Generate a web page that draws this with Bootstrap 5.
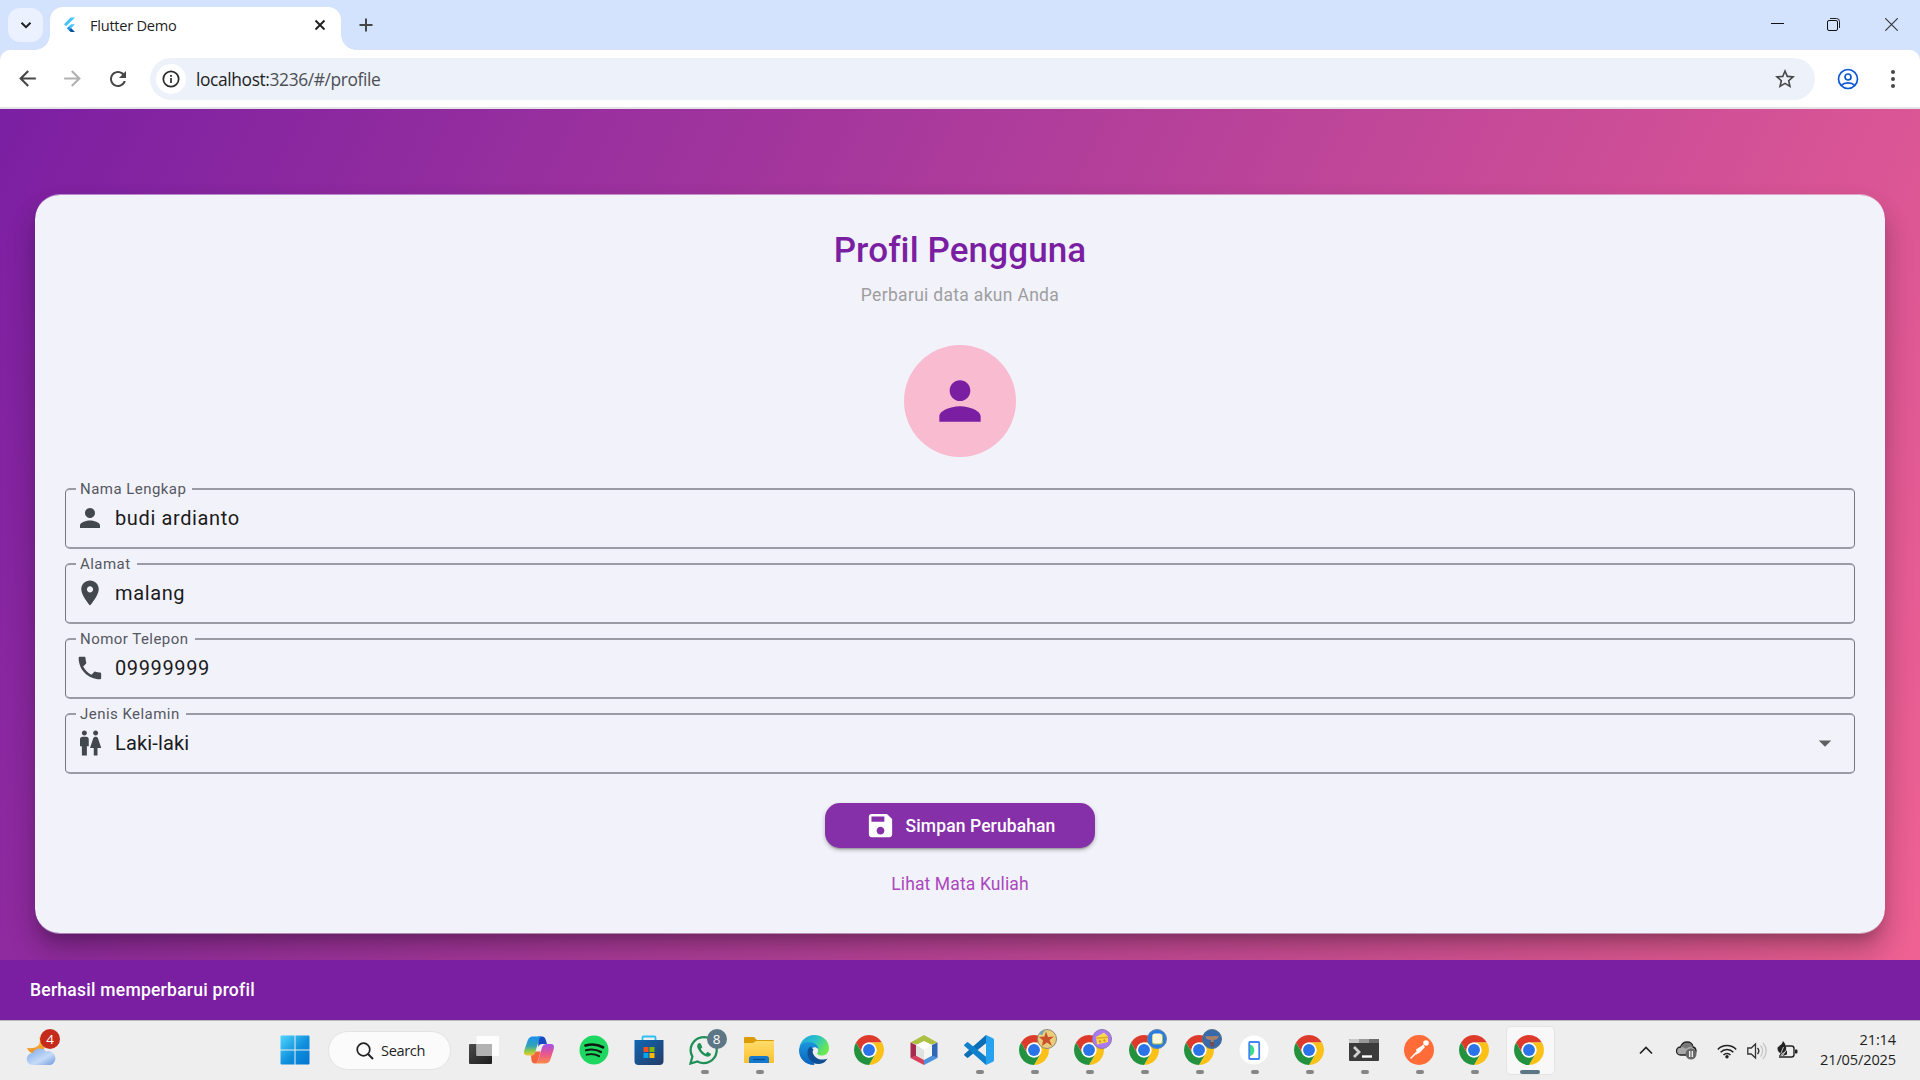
<!DOCTYPE html>
<html lang="id">
<head>
<meta charset="utf-8">
<title>Flutter Demo</title>
<link href="https://cdn.jsdelivr.net/npm/bootstrap@5.3.0/dist/css/bootstrap.min.css" rel="stylesheet">
<script src="https://cdn.jsdelivr.net/npm/bootstrap@5.3.0/dist/js/bootstrap.bundle.min.js"></script>
<style>
body{width:1920px;height:1080px;overflow:hidden;font-family:"Open Sans","Noto Sans",sans-serif;background:#fff;color:#1f1f1f}
svg{display:block;flex:none}
.tabstrip{height:50px;background:#d3e2fd;padding-left:8px}
.tab-search{width:35px;height:34px;border-radius:12px;background:#ebf1fe;margin:8px 7px 8px 0}
.tab-active{width:291px;height:43px;margin-top:7px;background:#fff;border-radius:13px 13px 0 0;padding:0 15px 7px 13px}
.tab-active::before,.tab-active::after{content:"";position:absolute;bottom:0;width:15px;height:15px}
.tab-active::before{left:-15px;background:radial-gradient(circle at 0 0,transparent 14.5px,#fff 15px)}
.tab-active::after{right:-15px;background:radial-gradient(circle at 100% 0,transparent 14.5px,#fff 15px)}
.tab-title{font-size:14.6px;letter-spacing:-.25px;margin-left:14px;line-height:20px}
.new-tab{margin:18px 0 0 18px}
.win-buttons{height:49px;margin-right:22px}
.win-max{margin:0 45px 0 -5px}
.toolbar-wrap{height:59px;background:#d3e2fd}
.toolbar-in{height:57px;background:#fff;border-radius:10px 10px 0 0;padding-left:15px}
.toolbar-line{height:2px;background:#e2e4e6}
.nav-fwd{margin-left:20px}
.nav-reload{margin-left:20.5px}
.omnibox{width:1665px;height:42px;border-radius:21px;background:#ecf1fa;margin-left:20.5px;padding:0 18px 0 6px}
.profile-ic{margin-left:22px}
.menu-ic{margin-left:31px}
.info-dot{width:30px;height:30px;background:#fff}
.url-text{font-size:17.4px;letter-spacing:-.39px;margin-left:10px;color:#4c4f54;line-height:24px}
.url-text span{color:#1f1f1f}
.app-view{height:911px;background:linear-gradient(115.38deg,#7b1fa2,#f06292);font-family:Roboto,sans-serif}
.profile-panel{margin:85px 35px 0;height:740px;border-radius:25px;background:#f2f2fb;background-clip:padding-box;border:0 solid rgba(242,242,251,.5);border-width:1px 0;padding:31px 30px 0;box-shadow:0 10px 13px -6px rgba(0,0,0,.2),0 20px 30px 2px rgba(0,0,0,.14),0 12px 26px 0 rgba(0,0,0,.1)}
.panel-title{font-size:35px;line-height:50px;font-weight:500;color:#7b1fa2;letter-spacing:.12px;margin:0}
.panel-sub{font-size:17.5px;line-height:28px;color:#9e9e9e;letter-spacing:.31px;margin:5px 0 35.5px}
.avatar-disc{width:112.5px;height:112.5px;background:#f8bbd0;color:#7b1fa2;margin-bottom:31px;padding-bottom:.5px}
.field-box{height:61px;margin-bottom:14px;border:1px solid #767880;border-top:2px solid #9a9ba4;border-bottom:2px solid #9a9ba4;border-radius:5px;padding:0 14px 2px 9px;color:#43474e}
.field-label{position:absolute;left:10px;top:-11px;background:#f2f2fb;padding:0 6px 0 4px;font-size:15px;line-height:20px;letter-spacing:.46px;color:#55585f}
.field-value{font-size:20px;letter-spacing:.62px;margin-left:10px;color:#1b1b20;line-height:30px}
.value-tight{letter-spacing:.15px}
.save-btn{width:270px;height:45px;border-radius:15px;background:#8530a8;color:#fff;border:0;margin-top:15px;font-size:17.5px;font-weight:500;letter-spacing:.1px;padding:1px 0 0;box-shadow:0 3px 2px -2px rgba(0,0,0,.25),0 2px 4px rgba(0,0,0,.25)}
.save-btn svg{margin:-1px 10px 0 0}
.courses-link{font-size:17.5px;letter-spacing:.13px;color:#ab47bc;line-height:24px;margin-top:24px}
.snack{height:60px;background:#7b1fa2;color:#fff;padding-left:30px;font-size:17.5px;font-weight:500;letter-spacing:.25px}
.taskbar{height:60px;background:#eee;border-top:1px solid #bdbdbd}
.weather{width:267px;padding-left:26px}
.weather .count{left:40px;top:-7px;background:#c42b1c}
.cell{width:55px;height:59px;padding-bottom:1px}
.cell.running::after{content:"";position:absolute;left:24px;top:49px;width:8px;height:4px;border-radius:2px;background:#868686}
.cell.focused::before{content:"";position:absolute;left:4px;top:5px;width:49px;height:49px;border-radius:5px;background:#f8f8f8;border:1px solid #e4e4e4}
.cell.focused::after{left:18px;width:20px;background:#5d7685}
.cell>svg{position:relative;z-index:1}
.cell .corner{position:absolute;left:30px;top:8px;z-index:2}
.count{border-radius:50%;width:20px;height:20px;color:#fff;font-size:13.5px;line-height:20px;text-align:center}
.unread{background:#5d7685}
.search-pill{width:123px;height:39px;border-radius:20px;background:#fbfbfb;border:1px solid #e3e3e3;margin:0 5.5px 0 6px;padding-left:27px;font-size:14.6px;letter-spacing:-.35px}
.search-pill span{margin-left:7px}
.tray{margin-right:24px}
.tray svg{margin-right:10px}
.tray .chev{margin-right:23px}
.tray .cloud{margin-right:20px}
.tray .batt{margin:0 0 2px}
.clock{font-size:14.6px;line-height:20px;letter-spacing:-.15px;text-align:right;width:98px;margin-top:-4px}
</style>
</head>
<body class="d-flex flex-column">
<svg width="0" height="0" class="position-absolute">
<defs>
<symbol id="chrome" viewBox="2 2 44 44">
<path fill="#dd3a2c" d="M43.05 13A22 22 0 0 0 4.95 13L14.47 29.5A11 11 0 0 1 24 13Z"/>
<path fill="#fbc116" d="M43.05 13A22 22 0 0 1 24 46L33.53 29.5A11 11 0 0 0 24 13Z"/>
<path fill="#23923f" d="M24 46A22 22 0 0 1 4.95 13L14.47 29.5A11 11 0 0 0 33.53 29.5Z"/>
<circle cx="24" cy="24" r="11" fill="#fff"/><circle cx="24" cy="24" r="8.7" fill="#2a74e8"/>
</symbol>
<symbol id="person" viewBox="0 0 24 24"><path fill="currentColor" d="M12 12c2.21 0 4-1.79 4-4s-1.79-4-4-4-4 1.79-4 4 1.79 4 4 4zm0 2c-2.67 0-8 1.34-8 4v2h16v-2c0-2.66-5.33-4-8-4z"/></symbol>
<linearGradient id="gw" x1="0" y1="0" x2="1" y2="1"><stop offset="0" stop-color="#50d5fd"/><stop offset=".55" stop-color="#0f8fdc"/><stop offset="1" stop-color="#0474d2"/></linearGradient>
<linearGradient id="gcl" x1="0" y1="0" x2="1" y2="1"><stop offset="0" stop-color="#7da7ea"/><stop offset=".6" stop-color="#c5dbf8"/><stop offset="1" stop-color="#6f97de"/></linearGradient>
<linearGradient id="gm" x1="0" y1="0" x2="0" y2="1"><stop offset="0" stop-color="#fbc645"/><stop offset="1" stop-color="#ee8a1d"/></linearGradient>
<linearGradient id="gc1" x1="0" y1="0" x2="0" y2="1"><stop offset="0" stop-color="#1b8df0"/><stop offset=".5" stop-color="#2fa5b5"/><stop offset=".8" stop-color="#9ccc3c"/><stop offset="1" stop-color="#f5c33a"/></linearGradient>
<linearGradient id="gc2" x1="0" y1="0" x2="0" y2="1"><stop offset="0" stop-color="#a252e8"/><stop offset=".5" stop-color="#e8568e"/><stop offset="1" stop-color="#fb8a4a"/></linearGradient>
<linearGradient id="gs" x1="0" y1="0" x2="1" y2="1"><stop offset="0" stop-color="#0f67b5"/><stop offset="1" stop-color="#243c66"/></linearGradient>
<linearGradient id="gf" x1="0" y1="0" x2="0" y2="1"><stop offset="0" stop-color="#ffdc6b"/><stop offset="1" stop-color="#fcc02e"/></linearGradient>
<linearGradient id="ge" x1="0" y1="0" x2="1" y2=".5"><stop offset="0" stop-color="#1a9fe0"/><stop offset=".55" stop-color="#2cc3c6"/><stop offset="1" stop-color="#6be84f"/></linearGradient>
<linearGradient id="ge2" x1="0" y1="0" x2="0" y2="1"><stop offset="0" stop-color="#1b96dc"/><stop offset="1" stop-color="#0b62bd"/></linearGradient>
<linearGradient id="gd" x1="0" y1="0" x2="1" y2="1"><stop offset="0" stop-color="#4a4a4a"/><stop offset="1" stop-color="#1d1d1d"/></linearGradient>
</defs></svg>

<header>
<div class="tabstrip d-flex">
  <div class="tab-search d-flex align-items-center justify-content-center"><svg width="12" height="12" viewBox="0 0 12 12"><path d="M1.5 3.7 6 8.2l4.5-4.5" fill="none" stroke="#1f1f1f" stroke-width="2"/></svg></div>
  <div class="tab-active position-relative d-flex align-items-center">
    <svg width="13" height="16" viewBox="0 0 13 16"><path fill="#47c5fb" d="M7.6.5H12L3.2 9.3 1 7.2Z"/><path fill="#47c5fb" d="M8 7.3h4L8 11.3 5.8 9.3Z"/><path fill="#2196f3" d="M3.8 11.3 5.9 9.2 8.3 11.5 6 13.5Z"/><path fill="#00569e" d="m6 13.5 2.2-2.2L12 15H7.7Z"/></svg>
    <span class="tab-title">Flutter Demo</span>
    <svg class="ms-auto" width="12" height="12" viewBox="0 0 12 12"><path d="m1.5 1.500 9 9m0-9-9 9" stroke="#1f1f1f" stroke-width="1.9"/></svg>
  </div>
  <svg class="new-tab" width="14" height="14" viewBox="0 0 14 14"><path d="M7 .5v13M.5 7h13" stroke="#474747" stroke-width="2"/></svg>
  <div class="win-buttons d-flex ms-auto align-items-center">
    <svg width="13" height="13" viewBox="0 0 13 13" class="me-5"><path d="M0 5.500h13" stroke="#111"/></svg>
    <svg class="win-max" width="13" height="13" viewBox="0 0 13 13"><path d="M3 .5h6.500a3 3 0 0 1 3 3V10" fill="none" stroke="#222"/><rect x=".5" y="2.5" width="10" height="10" rx="1.5" fill="none" stroke="#111"/></svg>
    <svg width="13" height="13" viewBox="0 0 13 13"><path d="m.3.3 12.400 12.400m0-12.400L.3 12.700" stroke="#333" stroke-width="1.1"/></svg>
  </div>
</div>
<div class="toolbar-wrap">
<div class="toolbar-in d-flex align-items-center">
  <svg width="25" height="25" viewBox="0 0 24 24"><path fill="#474747" d="M20 11H7.830l5.590-5.590L12 4l-8 8 8 8 1.410-1.410L7.830 13H20v-2z"/></svg>
  <svg class="nav-fwd" width="25" height="25" viewBox="0 0 24 24"><path fill="#b1b1b1" d="m12 4-1.410 1.410L16.170 11H4v2h12.170l-5.580 5.590L12 20l8-8z"/></svg>
  <svg class="nav-reload" width="24" height="24" viewBox="0 0 24 24"><path fill="#474747" d="M17.650 6.350C16.200 4.900 14.210 4 12 4c-4.420 0-7.990 3.580-7.990 8s3.570 8 7.990 8c3.730 0 6.840-2.550 7.730-6h-2.080c-.82 2.330-3.040 4-5.650 4-3.310 0-6-2.690-6-6s2.690-6 6-6c1.660 0 3.140.69 4.220 1.780L13 11h7V4l-2.350 2.350z"/></svg>
  <div class="omnibox d-flex align-items-center">
    <div class="info-dot rounded-circle d-flex align-items-center justify-content-center"><svg width="18" height="18" viewBox="0 0 18 18"><circle cx="9" cy="9" r="7.7" fill="none" stroke="#2b2b2b" stroke-width="1.7"/><path d="M9 8v5" stroke="#2b2b2b" stroke-width="1.7"/><path d="M9 5v1.800" stroke="#2b2b2b" stroke-width="1.8"/></svg></div>
    <div class="url-text"><span>localhost:</span>3236/#/profile</div>
    <svg class="ms-auto" width="24" height="24" viewBox="0 0 24 24"><path fill="#474747" d="m22 9.240-7.190-.62L12 2 9.190 8.630 2 9.240l5.460 4.730L5.820 21 12 17.270 18.180 21l-1.630-7.030L22 9.240zM12 15.400l-3.760 2.270 1-4.280-3.320-2.880 4.380-.38L12 6.100l1.710 4.040 4.380.38-3.320 2.880 1 4.280L12 15.400z"/></svg>
  </div>
  <svg class="profile-ic" width="22" height="22" viewBox="0 0 22 22"><g fill="none" stroke="#0b57d0" stroke-width="1.7"><circle cx="11" cy="11" r="9.5"/><circle cx="11" cy="9" r="3"/><path d="M4.300 17.300C6 15.600 8.300 14.900 11 14.900s5 .7 6.700 2.400"/></g></svg>
  <svg class="menu-ic" width="6" height="20" viewBox="0 0 6 20"><g fill="#474747"><circle cx="3" cy="3" r="2"/><circle cx="3" cy="10" r="2"/><circle cx="3" cy="17" r="2"/></g></svg>
</div>
<div class="toolbar-line"></div>
</div>
</header>

<main class="app-view d-flex flex-column overflow-hidden">
<section class="profile-panel d-flex flex-column align-items-center">
  <h1 class="panel-title">Profil Pengguna</h1>
  <p class="panel-sub">Perbarui data akun Anda</p>
  <div class="avatar-disc rounded-circle d-flex align-items-center justify-content-center"><svg width="62" height="62"><use href="#person"/></svg></div>
  <div class="w-100">
    <div class="field-box position-relative d-flex align-items-center"><label class="field-label">Nama Lengkap</label><svg width="30" height="30"><use href="#person"/></svg><span class="field-value">budi ardianto</span></div>
    <div class="field-box position-relative d-flex align-items-center"><label class="field-label">Alamat</label><svg width="30" height="30" viewBox="0 0 24 24"><path fill="currentColor" d="M12 2C8.130 2 5 5.130 5 9c0 5.250 7 13 7 13s7-7.750 7-13c0-3.870-3.130-7-7-7zm0 9.500c-1.380 0-2.500-1.120-2.500-2.500s1.120-2.500 2.500-2.500 2.500 1.120 2.500 2.500-1.120 2.500-2.500 2.500z"/></svg><span class="field-value">malang</span></div>
    <div class="field-box position-relative d-flex align-items-center"><label class="field-label">Nomor Telepon</label><svg width="30" height="30" viewBox="0 0 24 24"><path fill="currentColor" d="M6.540 10.790c1.440 2.830 3.760 5.140 6.590 6.590l2.200-2.200c.27-.27.67-.36 1.020-.24 1.120.37 2.330.57 3.570.57.55 0 1 .45 1 1V20c0 .55-.45 1-1 1-9.390 0-17-7.610-17-17 0-.55.45-1 1-1h3.500c.55 0 1 .45 1 1 0 1.250.2 2.450.57 3.570.11.35.03.74-.25 1.020l-2.200 2.200z"/></svg><span class="field-value">09999999</span></div>
    <div class="field-box position-relative d-flex align-items-center"><label class="field-label">Jenis Kelamin</label><svg width="30" height="30" viewBox="0 0 24 24"><path fill="currentColor" d="M5.500 22v-7.500H4V9c0-1.100.9-2 2-2h3c1.100 0 2 .9 2 2v5.500H9.500V22h-4zM18 22v-6h3l-2.540-7.630C18.180 7.550 17.420 7 16.560 7h-.12c-.86 0-1.630.55-1.900 1.370L12 16h3v6h3zM7.500 6c1.110 0 2-.89 2-2s-.89-2-2-2-2 .89-2 2 .89 2 2 2zm9 0c1.110 0 2-.89 2-2s-.89-2-2-2-2 .89-2 2 .89 2 2 2z"/></svg><span class="field-value value-tight">Laki-laki</span><svg class="ms-auto" width="30" height="30" viewBox="0 0 24 24"><path fill="#5f6062" d="m7 10 5 5 5-5z"/></svg></div>
  </div>
  <button class="save-btn d-flex align-items-center justify-content-center"><svg width="31" height="31" viewBox="0 0 24 24"><path fill="#fff" d="M17 3H5c-1.110 0-2 .9-2 2v14c0 1.100.89 2 2 2h14c1.100 0 2-.9 2-2V7l-4-4zm-5 16c-1.660 0-3-1.340-3-3s1.340-3 3-3 3 1.340 3 3-1.340 3-3 3zm3-10H5V5h10v4z"/></svg><span>Simpan Perubahan</span></button>
  <a class="courses-link text-decoration-none">Lihat Mata Kuliah</a>
</section>
<div class="snack d-flex align-items-center mt-auto position-relative">Berhasil memperbarui profil</div>
</main>

<footer class="taskbar d-flex align-items-center">
  <div class="weather position-relative"><svg width="32" height="30" viewBox="0 0 32 30"><path fill="url(#gm)" d="M13 1c3 8-2 12-12 11 2 4 5 6 10 6s8-5 8-9-3-7-6-8Z"/><path fill="url(#gcl)" d="M7 29a6 6 0 0 1-.5-12A8 8 0 0 1 20 15.500a7 7 0 0 1 4.500 13.500Z"/></svg>
    <span class="count position-absolute">4</span></div>
  <div class="cell d-flex align-items-center justify-content-center"><svg width="30" height="30" viewBox="0 0 30 30"><path fill="url(#gw)" d="M.5 1.500a1 1 0 0 1 1-1h13v14H.5Zm15-1h13a1 1 0 0 1 1 1v13h-14Zm-15 15h14v14h-13a1 1 0 0 1-1-1Zm15 0h14v13a1 1 0 0 1-1 1h-13Z"/></svg></div>
  <div class="search-pill d-flex align-items-center"><svg width="18" height="18" viewBox="0 0 18 18"><circle cx="7.5" cy="7.5" r="6.3" fill="none" stroke="#222" stroke-width="1.7"/><path d="m12 12 5 5" stroke="#222" stroke-width="2"/></svg><span>Search</span></div>
  <div class="cell d-flex align-items-center justify-content-center"><svg width="30" height="30" viewBox="0 0 30 30"><rect y="9" width="23" height="20" rx="1" fill="url(#gd)"/><rect x="7.5" y="1" width="22.5" height="20" rx="1" fill="#fff" opacity=".85"/><path d="M7.500 9H23v12H8.500a1 1 0 0 1-1-1Z" fill="#b2b2b2"/></svg></div>
  <div class="cell d-flex align-items-center justify-content-center"><svg width="30" height="30" viewBox="0 0 30 30"><path fill="#1648c4" d="M14 1.500h4c2 0 3 1 3.600 3L23 9h-5c-2 0-3 1-3.600 3Z"/><path fill="url(#gc1)" d="M9 1.500h9c-2 .5-2.600 2-3.200 4l-3.300 11C10.800 19 9.500 20.500 7 20.500H3c-3 0-3.500-2.500-2.600-5.500L3.500 6C4.500 3 6 1.500 9 1.500Z"/><path fill="#f4643c" d="M7 20.500c2.500 0 3.800-1.500 4.500-4h5l-2 7.500c-.7 3-2 4.500-3.500 4.500-2 0-3-1-3.500-3Z"/><path fill="url(#gc2)" d="M23 9h4c3 0 3.500 2.500 2.600 5.500l-3 9.500c-1 3-2.600 4.500-5.600 4.500H11c2-.5 2.800-2 3.400-4l3.600-12C18.800 10 20.500 9 23 9Z"/></svg></div>
  <div class="cell d-flex align-items-center justify-content-center"><svg width="30" height="30" viewBox="0 0 30 30"><circle cx="15" cy="15" r="14.5" fill="#1ed760"/><g fill="none" stroke="#10190f" stroke-linecap="round"><path d="M6.500 10.500c6-1.700 12.500-1 17.500 1.800" stroke-width="2.7"/><path d="M7 15.300c5-1.400 10.500-.8 15 1.700" stroke-width="2.2"/><path d="M7.600 19.700c4.200-1 8.800-.6 12.500 1.500" stroke-width="1.9"/></g></svg></div>
  <div class="cell d-flex align-items-center justify-content-center"><svg width="30" height="30" viewBox="0 0 30 30"><path d="M8.500 6V2.500a1 1 0 0 1 1-1h11a1 1 0 0 1 1 1V6" fill="none" stroke="#2bc0f0" stroke-width="1.8"/><path fill="url(#gs)" d="M.5 5h29v21a4 4 0 0 1-4 4h-21a4 4 0 0 1-4-4Z"/><path fill="#f25022" d="M9.500 12h5v5h-5z"/><path fill="#7fba00" d="M15.500 12h5v5h-5z"/><path fill="#00a4ef" d="M9.500 18h5v5h-5z"/><path fill="#ffb900" d="M15.500 18h5v5h-5z"/></svg></div>
  <div class="cell running position-relative d-flex align-items-center justify-content-center"><svg width="30" height="30" viewBox="0 0 30 30"><path fill="none" stroke="#1f8f58" stroke-width="2.3" d="M1.500 28.500 3.400 21.500A13 13 0 1 1 8.500 26.500Z"/><path fill="#1f8f58" d="M10 8c-2 1-2.500 3.500-1 6 2.300 4 5 6.500 8.500 7.500 2 .5 4-.5 4.600-2.600l-3.600-2.100-1.700 1.900c-2-.8-4-2.700-5-4.700l1.500-1.800-1.600-3.700C11.200 8 10.600 7.800 10 8Z"/></svg><span class="corner count unread">8</span></div>
  <div class="cell running position-relative d-flex align-items-center justify-content-center"><svg width="30" height="30" viewBox="0 0 30 30"><path fill="#dd9a09" d="M0 3a1 1 0 0 1 1-1h9l3 3h16a1 1 0 0 1 1 1v5H0Z"/><path fill="url(#gf)" d="M0 8h9l3-2h18v21a1 1 0 0 1-1 1H1a1 1 0 0 1-1-1Z"/><path fill="#1479cf" d="M5 28v-4.500a2.500 2.500 0 0 1 2.500-2.500h15a2.500 2.500 0 0 1 2.500 2.500V28Z"/><path d="M9 24.500h12" stroke="#0b4d8f" stroke-width="1.3"/></svg></div>
  <div class="cell d-flex align-items-center justify-content-center"><svg width="30" height="30" viewBox="0 0 30 30"><path fill="url(#ge)" d="M.5 12C2 5 8 0 15 0c9 0 15 6 15 13 0 5-3.500 7.500-7 7.500-3.500 0-5.500-1.500-4.500-3 1.500-2 .8-5.500-3.500-6.500-5-1-11-.5-14.500 1Z"/><path fill="url(#ge2)" d="M15 30C6 30 0 23 0 15.500 0 10 4.500 7 9.500 7c5 0 9.800 3 9.800 7-3-3.500-7.300-1.500-7.300 2C12 23 17 29 15 30Z"/><path fill="#114f94" d="M11.500 11.500C8 14 7.500 19 10 23.500c2.800 5 9 7 14 4.500 2-1 3.500-2.600 4.500-4.500-3 1.500-8 1.800-11.500-1-3.500-2.800-4-6.500-2.500-8Z"/></svg></div>
  <div class="cell d-flex align-items-center justify-content-center"><svg width="30" height="30"><use href="#chrome"/></svg></div>
  <div class="cell d-flex align-items-center justify-content-center"><svg width="30" height="30" viewBox="0 0 30 30"><path fill="#acc043" d="M15 0 28.500 7.500 15 12 1.500 7.500Z"/><path fill="#a72b50" d="M1.500 7.500 7 10v11l-5.500 2Z"/><path fill="#d6405d" d="M1.500 23 7 20.500l8 4.500v5Z"/><path fill="#3167b4" d="M28.500 7.500 23 10v11l5.500 2Z"/><path fill="#4c92dd" d="m28.500 23-5.500-2.500-8 4.500v5Z"/><path fill="#fff" d="m15 6 8 4-8 5-8-5Z"/><path fill="#dfe3e0" d="m7 10 8 5v9.500L7 20.500Z"/><path fill="#f4f6f3" d="m23 10-8 5v9.500l8-4Z"/></svg></div>
  <div class="cell running position-relative d-flex align-items-center justify-content-center"><svg width="30" height="30" viewBox="0 0 30 30"><path fill="#0b6fb8" d="M22 0v8.300L4.300 22.600a1.200 1.200 0 0 1-1.600 0L.5 20.500a1 1 0 0 1 0-1.500Z"/><path fill="#0e80cc" d="M22 30v-8.300L4.300 7.400a1.200 1.200 0 0 0-1.600 0L.5 9.500a1 1 0 0 0 0 1.500Z"/><path fill="#27a2f0" d="m22 0 7 3.300c.7.3 1 .9 1 1.700v20c0 .8-.3 1.400-1 1.700L22 30Z"/></svg></div>
  <div class="cell running position-relative d-flex align-items-center justify-content-center"><svg width="30" height="30"><use href="#chrome"/></svg><svg class="corner" width="20" height="20" viewBox="0 0 20 20"><circle cx="10" cy="10" r="9.5" fill="#e9cc7c" stroke="#8f8972"/><path fill="#6ba8c4" d="M2 5a9 9 0 0 1 6-4L5 6Z"/><path fill="#c9512c" d="m9 2.500 2 5.500 6-.5-4.500 3.500 2.500 6-5-3.500-5 3.500 1-5.500L2 8l5.500-.5Z"/></svg></div>
  <div class="cell running position-relative d-flex align-items-center justify-content-center"><svg width="30" height="30"><use href="#chrome"/></svg><svg class="corner" width="20" height="20" viewBox="0 0 20 20"><circle cx="10" cy="10" r="9.5" fill="#aa78f2" stroke="#8b79ad"/><path fill="#f6d94d" d="m4 8 8-4.500 4 4V13L5 15.500Z"/><path fill="#e0a828" d="m4 8.500 12-1V9L4.500 10Z"/><circle cx="8" cy="12.5" r="1.3" fill="#d99a1c"/><circle cx="12.5" cy="11.5" r="1.2" fill="#d99a1c"/></svg></div>
  <div class="cell running position-relative d-flex align-items-center justify-content-center"><svg width="30" height="30"><use href="#chrome"/></svg><svg class="corner" width="20" height="20" viewBox="0 0 20 20"><circle cx="10" cy="10" r="9.5" fill="#2b7be4" stroke="#6486a6"/><rect x="5" y="5" width="11" height="10.5" rx="2" fill="#9fbf52"/><rect x="5.5" y="4.5" width="9.5" height="10" rx="2.5" fill="#fdf6dc"/></svg></div>
  <div class="cell running position-relative d-flex align-items-center justify-content-center"><svg width="30" height="30"><use href="#chrome"/></svg><svg class="corner" width="20" height="20" viewBox="0 0 20 20"><circle cx="10" cy="10" r="9.5" fill="#3869a8" stroke="#54708f"/><path fill="#a98069" d="M3 7c3 1 5-.5 7 .5C12 6.500 14 7.500 17 7c-1 3-3.500 4-5.500 4l.5 4-3 1.500V11C6 11 4 10 3 7Z"/><path fill="#7b4a48" d="M8 13h4v4l-3 1Z"/></svg></div>
  <div class="cell running position-relative d-flex align-items-center justify-content-center"><svg width="30" height="30" viewBox="0 0 30 30"><circle cx="15" cy="15" r="14.5" fill="#fff"/><path fill="#3ddc84" d="M11 9.500a6 6 0 0 1 0 11.500Z"/><rect x="10.2" y="7" width="10" height="17" rx=".8" fill="none" stroke="#4285f4" stroke-width="1.8"/></svg></div>
  <div class="cell running position-relative d-flex align-items-center justify-content-center"><svg width="30" height="30"><use href="#chrome"/></svg></div>
  <div class="cell running position-relative d-flex align-items-center justify-content-center"><svg width="30" height="30" viewBox="0 0 30 30"><rect y="4" width="30" height="22" rx="1" fill="#3b3b3b"/><path fill="#c9c9c9" d="M0 5a1 1 0 0 1 1-1h9v4H0Z"/><path fill="#989898" d="M10 4h10v4H10Z"/><path fill="#6b6b6b" d="M20 4h9a1 1 0 0 1 1 1v3H20Z"/><path d="m5 12 5 5-5 5" fill="none" stroke="#d0d0d0" stroke-width="2.8"/><path d="M13 21.500h10" stroke="#fff" stroke-width="2.4"/></svg></div>
  <div class="cell running position-relative d-flex align-items-center justify-content-center"><svg width="30" height="30" viewBox="0 0 30 30"><circle cx="15" cy="15" r="15" fill="#ff6c37"/><circle cx="22" cy="8" r="2.8" fill="#fff"/><path d="m20 10-6 6-7 7" stroke="#fff" stroke-width="1.6" stroke-linecap="round"/><path fill="#fff" d="m12 14.500 7-4.500 2 2-5 5.500-4.500 2.500 1.500-3Z"/><path d="m19.500 9.500 2.500 2.500" stroke="#ff6c37" stroke-width=".8"/></svg></div>
  <div class="cell running position-relative d-flex align-items-center justify-content-center"><svg width="30" height="30"><use href="#chrome"/></svg></div>
  <div class="cell running focused position-relative d-flex align-items-center justify-content-center"><svg width="30" height="30"><use href="#chrome"/></svg></div>
  <div class="tray ms-auto d-flex align-items-center">
    <svg class="chev" width="14" height="9" viewBox="0 0 14 9"><path d="m1 7.500 6-6 6 6" fill="none" stroke="#222" stroke-width="1.7"/></svg>
    <svg class="cloud" width="21" height="19" viewBox="0 0 21 19"><path fill="#a8a8a8" stroke="#222" stroke-width="1.3" d="M4.500 14a4 4 0 0 1 0-8C6 2.500 8 1 11 1c3 0 5.500 2 6 5 2 .5 3 2 3 4s-1.500 4-3.500 4Z"/><path fill="#777" d="M5 6c2-4.500 10-6 12 0-4-1-6 1-7 2-1-1.500-3-2-5-2Z"/><circle cx="15" cy="13" r="5.5" fill="#686868"/><path d="M13.700 10v6m2.600-6v6" stroke="#fff" stroke-width="1.2"/></svg>
    <svg width="20" height="16" viewBox="0 0 20 16"><g fill="none" stroke="#222" stroke-width="1.5"><path d="M.8 6.500c5-5.300 13.400-5.300 18.400 0M3.600 9.300c3.500-3.700 9.300-3.700 12.800 0M6.500 12c2-2.100 5-2.100 7 0"/></g><circle cx="10" cy="13.8" r="1.7" fill="#222"/></svg>
    <svg width="20" height="18" viewBox="0 0 20 18"><path fill="none" stroke="#333" stroke-width="1.3" d="M.8 6h3.400L8.500 2v14l-4.300-4H.8Z"/><path fill="none" stroke="#333" stroke-width="1.4" d="M10.500 6c1.600 1.800 1.600 4.200 0 6"/><path fill="none" stroke="#c4c4c4" stroke-width="1.3" d="M13.500 3.500c2.800 3.300 2.800 7.700 0 11M16 1c4.200 4.800 4.200 11.200 0 16"/></svg>
    <svg class="batt" width="21" height="18" viewBox="0 0 21 18"><path fill="none" stroke="#222" stroke-width="1.4" d="M9 5h5.500A2.500 2.500 0 0 1 17 7.500v6a2.500 2.500 0 0 1-2.500 2.500H2"/><path fill="#222" d="M18 8.500h1.500a1 1 0 0 1 1 1v2a1 1 0 0 1-1 1H18ZM6 0c3 3 4 7 2.500 10L6 13c-1 1-2 2-4.500 2C3 14 3.500 13 3.500 12 .5 11 0 8 1 5.500c1 .5 1.500 0 1.500-1C4 4.500 5.500 2 6 0Z"/><path d="M4 12 6.500 6M4 13.500 11 9v4" fill="none" stroke="#eee" stroke-width=".8"/><path fill="#222" d="M5.500 15 10 9v4.500Z"/></svg>
    <div class="clock">21:14<br>21/05/2025</div>
  </div>
</footer>
</body>
</html>
